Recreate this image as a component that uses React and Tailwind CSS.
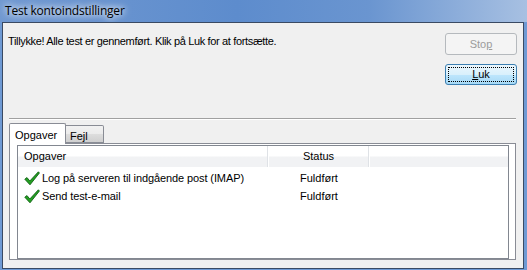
import React from "react";

const ui = { fontFamily: "'Liberation Sans', Arial, sans-serif" };

function Check() {
  return (
    <svg width="16" height="15" viewBox="0 0 16 15" className="shrink-0">
      <path d="M0.8 8.2 L3 6.6 L5.8 10 L14.4 0.8 L15.4 2 L6 13.8 Z" fill="#23a021" stroke="#0d5f12" strokeWidth="0.9" strokeLinejoin="round" />
    </svg>
  );
}

function Row({ task, status }) {
  return (
    <div className="flex h-[18px] items-center whitespace-nowrap">
      <div className="flex w-[251px] items-center pl-[6px]">
        <Check />
        <span className="ml-[2px] tracking-[-0.1px]">{task}</span>
      </div>
      <div className="pl-[31px]">{status}</div>
    </div>
  );
}

export default function App() {
  return (
    <div className="w-[527px] h-[270px] bg-[#6f9ad4] flex flex-col text-[11px] text-black" style={ui}>
      <div className="h-[22px] shrink-0 flex items-center pl-[5px] bg-[linear-gradient(90deg,#7199d1_0%,#5d8ccd_45%,#6a95d0_70%,#a7c0e2_100%)]">
        <span className="text-[12px] tracking-[-0.2px] [text-shadow:0_0_6px_#fff,0_0_10px_#fff]" style={{ fontFamily: "'Open Sans', 'Liberation Sans', sans-serif" }}>
          Test kontoindstillinger
        </span>
      </div>

      <div className="ml-[2px] mr-[3px] mb-[1px] flex-1 flex flex-col border border-[#3a4a63] bg-[#f0f0f0]">
        <div className="flex h-[93px] shrink-0">
          <div className="flex-1 pl-[5px] pt-[10px] whitespace-nowrap tracking-[-0.35px]">
            Tillykke! Alle test er gennemført. Klik på Luk for at fortsætte.
          </div>
          <div className="flex flex-col gap-[9px] pt-[10px] pr-[6px]">
            <div className="w-[72px] h-[22px] flex items-center justify-center rounded-[3px] border border-[#b5b9bd] bg-[#f4f4f4] text-[#9c9c9c]">
              <span>
                Sto<span className="underline">p</span>
              </span>
            </div>
            <div className="w-[72px] h-[21px] rounded-[3px] border border-[#3c7fb1] bg-[linear-gradient(180deg,#eaf6fd_0%,#d9f0fc_50%,#bee6fd_51%,#a7d9f5_100%)] p-[2px]">
              <div className="h-full flex items-center justify-center border border-dotted border-black">
                <span>
                  <span className="underline">L</span>uk
                </span>
              </div>
            </div>
          </div>
        </div>

        <div className="ml-[6px] mr-[7px] mt-[2px] border-t border-[#a0a0a0] border-b border-b-white" />

        <div className="flex flex-col ml-[6px] mr-[7px] mt-[3px]">
          <div className="flex items-end h-[20px] relative z-10">
            <div className="h-[21px] w-[57px] -mb-[1px] border border-[#898c95] border-b-0 bg-white rounded-t-[2px] pl-[5px] pt-[3px]">
              Opgaver
            </div>
            <div className="h-[18px] w-[38px] border border-l-0 border-[#898c95] bg-[linear-gradient(180deg,#f2f2f2_0%,#ebebeb_50%,#dddddd_51%,#cfcfcf_100%)] rounded-tr-[2px] pl-[4px] pt-[2px]">
              Fejl
            </div>
          </div>
          <div className="h-[117px] border border-[#898c95] bg-white pl-[7px] pr-[6px] pt-[1px]">
            <div className="h-full border border-[#828790] bg-white">
              <div className="flex h-[21px] bg-[linear-gradient(180deg,#ffffff_0%,#ffffff_45%,#f1f2f4_55%,#f1f2f4_100%)]">
                <div className="w-[250px] flex items-center pl-[6px] border-r border-[#dfe2e6]">Opgaver</div>
                <div className="w-[101px] flex items-center justify-center border-l border-white border-r border-r-[#dfe2e6]">Status</div>
                <div className="flex-1 border-l border-white" />
              </div>
              <div className="pt-[2px]">
                <Row task="Log på serveren til indgående post (IMAP)" status="Fuldført" />
                <Row task="Send test-e-mail" status="Fuldført" />
              </div>
            </div>
          </div>
        </div>
      </div>
    </div>
  );
}
